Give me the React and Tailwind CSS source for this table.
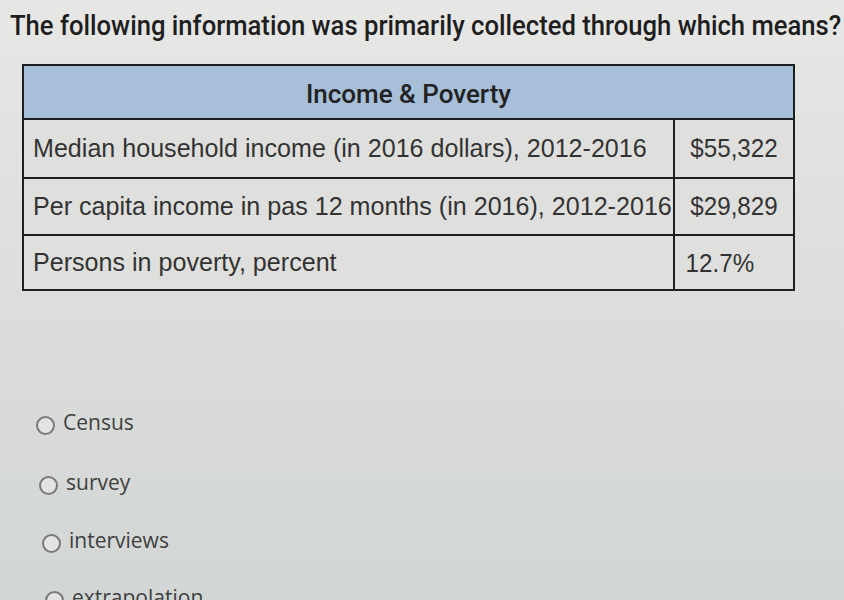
import React from "react";

const rows = [
  ["Median household income (in 2016 dollars), 2012-2016", "$55,322", "h-[59px]"],
  ["Per capita income in pas 12 months (in 2016), 2012-2016", "$29,829", "h-[57px]"],
  ["Persons in poverty, percent", "12.7%", "h-[53px]"],
];

const options = [
  ["Census", "ml-[36px]", "mt-[0px]"],
  ["survey", "ml-[39px]", "mt-[33px]"],
  ["interviews", "ml-[42px]", "mt-[31px]"],
  ["extrapolation", "ml-[45px]", "mt-[30px]"],
];

export default function App() {
  return (
    <div className="w-[844px] h-[600px] overflow-hidden bg-gradient-to-b from-[#e7e7e5] via-[#dcdedc] to-[#d2d6d4] text-[#2a2a2a]" style={{ fontFamily: '"Liberation Sans", Arial, sans-serif' }}>
      <div className="pl-[10px] pt-[10px] whitespace-nowrap h-[42px]">
        <span className="inline-block origin-left scale-x-[0.915] text-[28px] leading-[32px] text-[#1e1e1e] font-medium" style={{ fontFamily: 'Roboto, "Liberation Sans", sans-serif' }}>
          The following information was primarily collected through which means?
        </span>
      </div>
      <div className="ml-[22px] mt-[22px] w-[773px] border-2 border-[#1f1f1f] bg-[#dfe0dd]">
        <div className="h-[54px] bg-[#a7bfd8] border-b-2 border-[#1f1f1f] flex items-center justify-center pt-[4px]">
          <span className="inline-block text-[26px] text-[#222] font-medium" style={{ fontFamily: 'Roboto, "Liberation Sans", sans-serif' }}>Income &amp; Poverty</span>
        </div>
        {rows.map(([label, value, h], i) => (
          <div key={i} className={`flex ${h} ${i < rows.length - 1 ? "border-b-2 border-[#1f1f1f]" : ""}`}>
            <div className="flex-1 min-w-0 flex items-center pl-[9px] whitespace-nowrap">
              <span className="inline-block origin-left scale-x-[0.965] text-[26px] text-[#333]">{label}</span>
            </div>
            <div className={`w-[120px] shrink-0 border-l-2 border-[#1f1f1f] flex ${i === 2 ? "items-start pt-[8px] pl-[8px]" : "items-center justify-center"}`}>
              <span className="inline-block scale-x-[0.93] text-[26px] text-[#333]">{value}</span>
            </div>
          </div>
        ))}
      </div>
      <div className="mt-[117px] flex flex-col" style={{ fontFamily: '"Open Sans", "Liberation Sans", sans-serif' }}>
        {options.map(([o, ml, mt]) => (
          <label key={o} className={`flex items-center gap-[8px] text-[21px] leading-[22px] text-[#3f3f3f] ${ml} ${mt}`}>
            <span className="w-[19px] h-[19px] mt-[8px] rounded-full border-2 border-[#7a7a7a] bg-[#e2e4e2] shrink-0" />
            <span>{o}</span>
          </label>
        ))}
      </div>
    </div>
  );
}
